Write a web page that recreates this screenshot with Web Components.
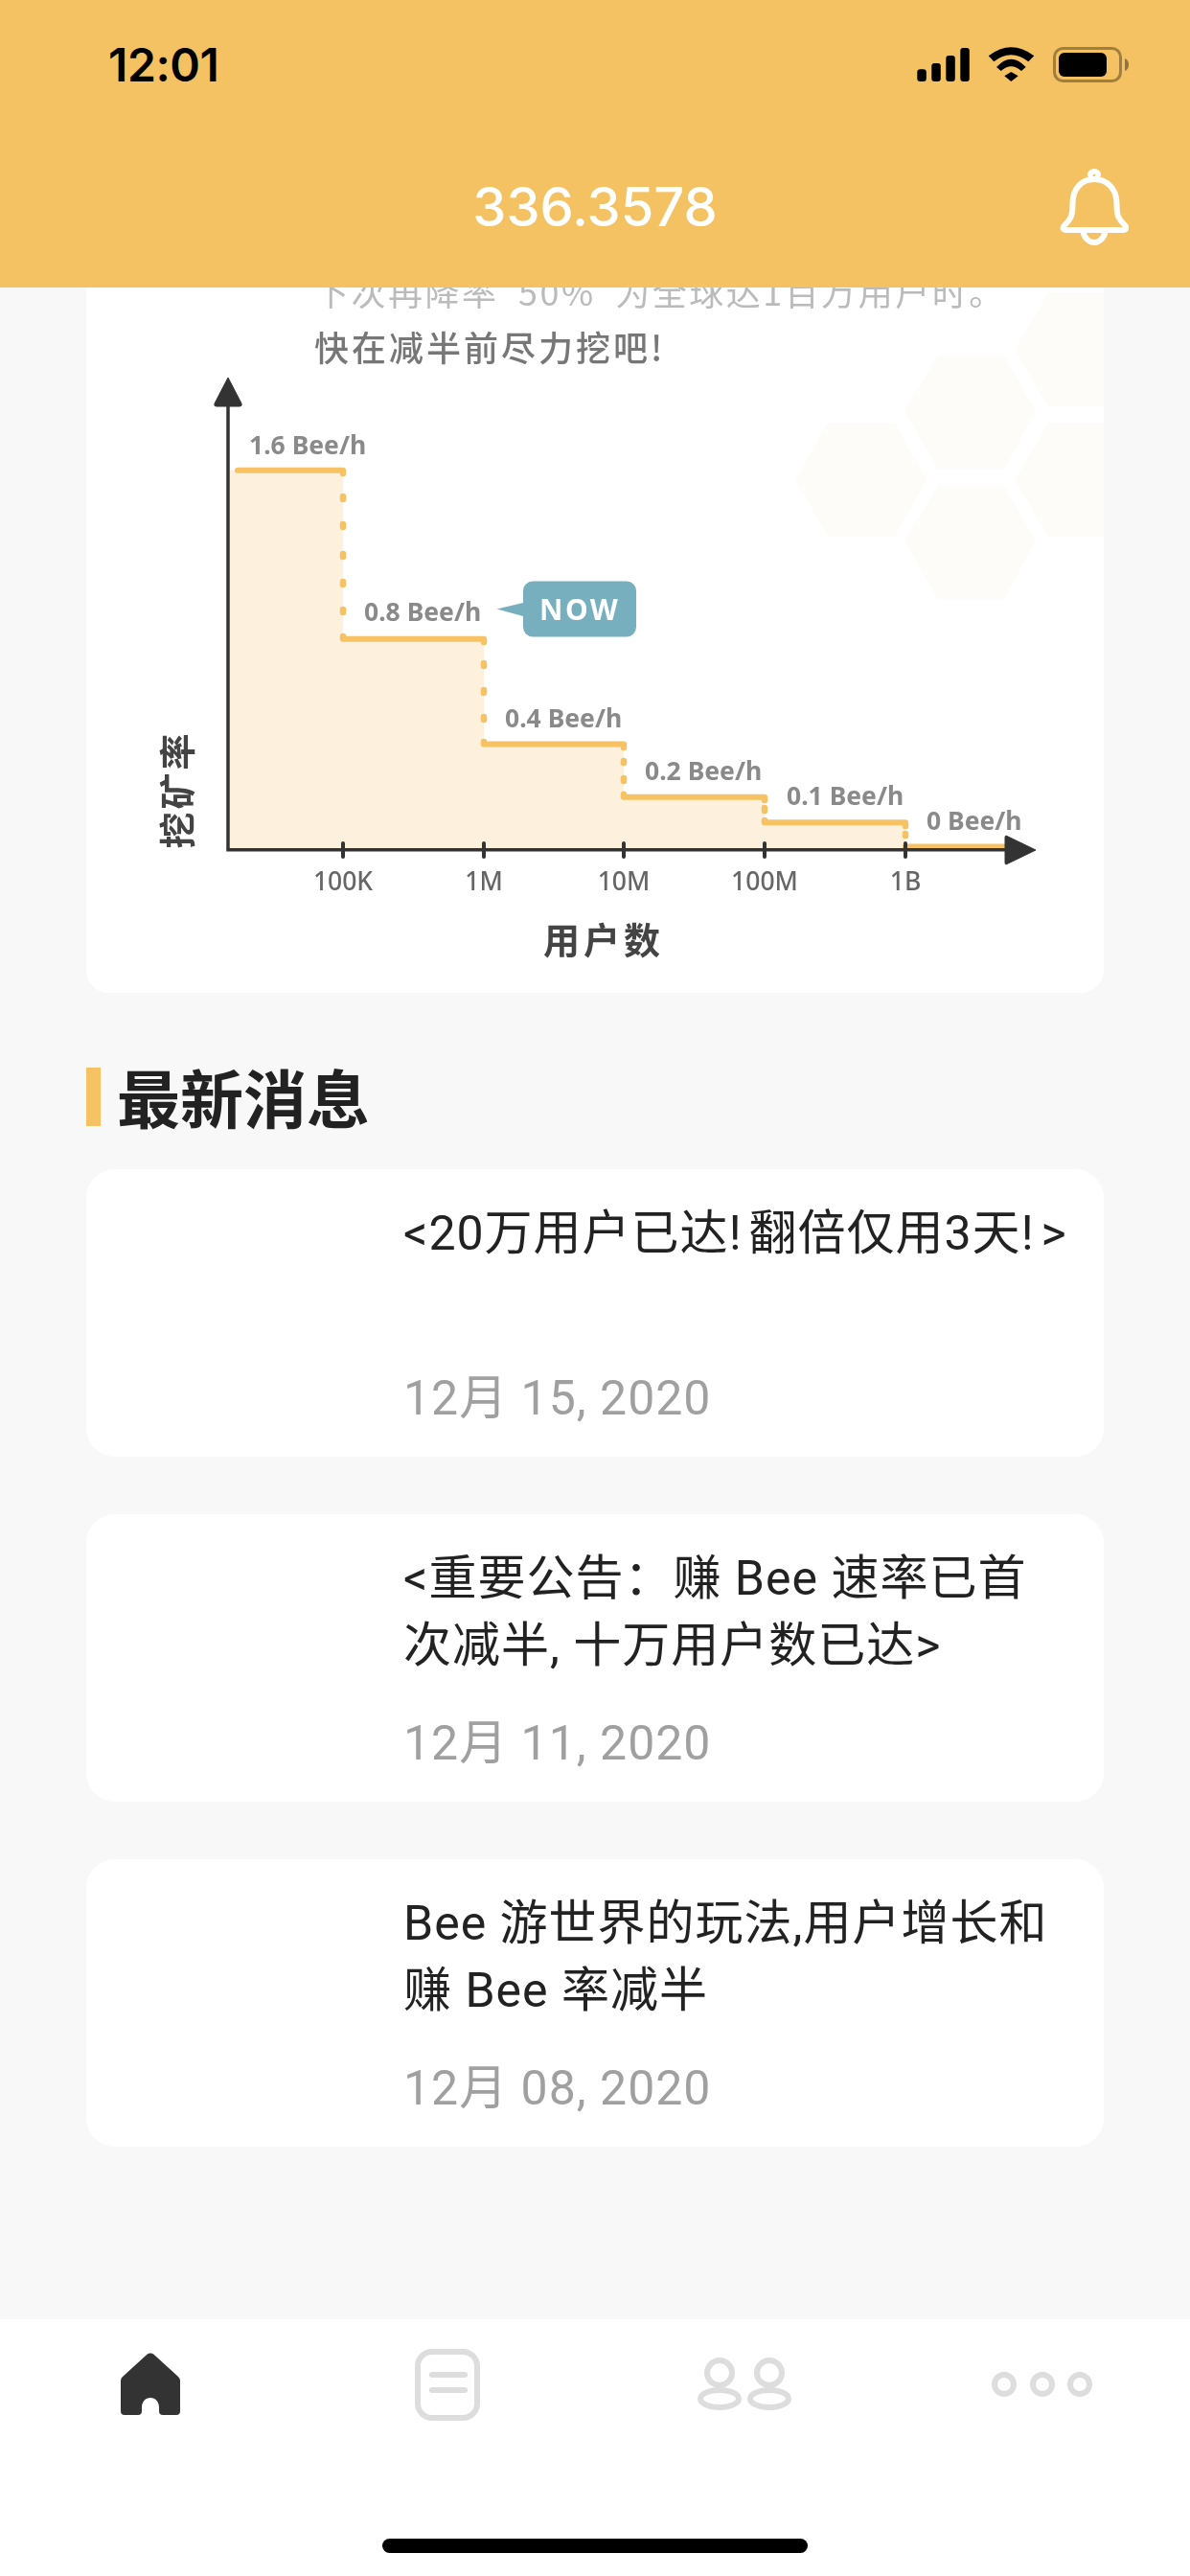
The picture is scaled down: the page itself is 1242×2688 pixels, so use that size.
<!doctype html>
<html>
  <head>
    <meta charset="utf-8">
    <title>Bee</title>
    <style>
      html, body {
        margin: 0;
        padding: 0;
      }

      body {
        background: #f8f8f8;
        color: #222;
        display: flex;
        flex-direction: column;
        font-family: Roboto, "Noto Sans CJK SC", sans-serif;
        height: 2688px;
        overflow: hidden;
        width: 1242px;
      }
    </style>
  </head>
  <body>
    <app-header value="336.3578"></app-header>

    <page-content>
      <mining-chart></mining-chart>

      <section-title>最新消息</section-title>

      <news-list>
        <news-card>
          &lt;20万用户已达<span style="letter-spacing: 8px">!</span>翻倍仅用3天<span style="letter-spacing: 8px">!</span>&gt;
          <span slot="date">12月 15, 2020</span>
        </news-card>
        <news-card>
          &lt;重要公告：赚 Bee 速率已首<br>次减半, 十万用户数已达&gt;
          <span slot="date">12月 11, 2020</span>
        </news-card>
        <news-card>
          Bee 游世界的玩法,用户增长和<br>赚 Bee 率减半
          <span slot="date">12月 08, 2020</span>
        </news-card>
      </news-list>
    </page-content>

    <tab-bar></tab-bar>

    <template data-name="status-bar">
      <style>
        :host {
          align-items: center;
          box-sizing: border-box;
          color: #000;
          display: flex;
          height: 135px;
          justify-content: space-between;
          padding: 0 64px 0 113px;
        }

        .time {
          font-family: Inter, "Liberation Sans", sans-serif;
          font-size: 48px;
          font-weight: 600;
          letter-spacing: -.4px;
          line-height: 37px;
        }

        svg {
          display: block;
        }
      </style>

      <span class="time">12:01</span>
      <svg width="221" height="37" viewBox="957 49 221 37">
        <rect x="957.3" y="72.3" width="9.5" height="12.7" rx="3"></rect>
        <rect x="972.3" y="66" width="9.5" height="19" rx="3"></rect>
        <rect x="987.3" y="58" width="9.5" height="27" rx="3"></rect>
        <rect x="1002.3" y="50" width="9.5" height="35" rx="3"></rect>
        <path d="M1031.7 58.3Q1055.3 40.3 1079.3 58.3L1073.3 64.3Q1055.3 50.3 1037.3 64.3Z"></path>
        <path d="M1040 70Q1055.3 53.4 1070.7 70L1066 74Q1055.3 64.6 1044.7 74Z"></path>
        <path d="M1048.3 79.3L1055.3 75L1062.7 79.3L1055.3 85Z"></path>
        <rect x="1100.5" y="50.5" width="69" height="34" rx="9" fill="none" stroke="#000" stroke-opacity=".35" stroke-width="3"></rect>
        <rect x="1105" y="55" width="50" height="25" rx="6"></rect>
        <path d="M1174 61C1177 62 1178 65 1178 67.500C1178 70 1177 73 1174 74Z" fill-opacity=".4"></path>
      </svg>
    </template>

    <template data-name="app-header">
      <style>
        :host {
          background: #f4c262;
          display: block;
          flex: none;
          height: 300px;
          position: relative;
          z-index: 1;
        }

        .nav {
          align-items: center;
          display: grid;
          grid-template-columns: 1fr auto 1fr;
          height: 162px;
          padding-right: 64px;
          padding-left: 64px;
        }

        .value {
          color: #fff;
          font-family: Inter, "Liberation Sans", sans-serif;
          font-size: 56px;
          font-weight: 500;
          grid-column: 2;
        }

        svg {
          display: block;
          grid-column: 3;
          justify-self: end;
        }
      </style>

      <status-bar></status-bar>
      <div class="nav">
        <span class="value"></span>
        <svg width="72" height="82" viewBox="1106 176 72 82" fill="none" stroke="#fff" stroke-width="6" stroke-linejoin="round">
          <rect x="1135" y="177" width="14" height="12" rx="7" fill="#fff" stroke="none"></rect>
          <path d="M1142 183V191" stroke="#f4c262" stroke-width="2.500"></path>
          <path d="M1142 188C1128 188 1119.500 199 1119.500 213C1119.500 226 1118 229 1111 236C1108 239 1110 241 1113 241H1172C1175 241 1177 239 1174 236C1167 229 1165.500 226 1165.500 213C1165.500 199 1156 188 1142 188Z"></path>
          <path d="M1130.500 243C1132 250 1137 254 1142 254C1147 254 1152 250 1153.500 243"></path>
        </svg>
      </div>
    </template>

    <template data-name="page-content">
      <style>
        :host {
          display: block;
          flex: 1;
          min-height: 0;
          overflow: hidden;
          padding: 0 90px;
        }
      </style>

      <slot></slot>
    </template>

    <template data-name="mining-chart">
      <style>
        :host {
          background: #fff;
          border-radius: 24px;
          display: block;
          height: 756px;
          margin-top: -20px;
          overflow: hidden;
        }

        svg {
          display: block;
          filter: blur(.5px);
        }

        .note {
          font-family: "Noto Sans CJK SC", sans-serif;
          font-size: 36px;
        }

        .rate {
          fill: #8a8a8a;
          font-family: "Noto Sans", sans-serif;
          font-size: 26.500px;
          font-weight: 700;
        }

        .tick {
          fill: #666;
          font-family: "Noto Sans", sans-serif;
          font-size: 26.500px;
          font-weight: 500;
          text-anchor: middle;
        }

        .axis {
          fill: #444;
          font-family: "Noto Sans CJK SC", sans-serif;
          font-size: 38px;
          font-weight: 700;
          text-anchor: middle;
        }

        .now {
          fill: #fff;
          font-family: "Noto Sans", sans-serif;
          font-size: 30px;
          font-weight: 700;
          letter-spacing: 2.500px;
        }
      </style>

      <svg width="1062" height="756" viewBox="90 280 1062 756">
        <g fill="#fdfcf8">
          <path d="M830 500.500L864 441.500H934L967 500.500L934 560H864Z"></path>
          <path d="M944 429L979 371H1048L1081 429L1048 490H979Z"></path>
          <path d="M944 564.500L979 507H1048L1081 564.500L1048 626H979Z"></path>
          <path d="M1059 500.500L1094 441.500H1152V560H1094Z"></path>
          <path d="M1059 365L1094 305.500H1152V424.500H1094Z"></path>
        </g>

        <text class="note" x="328" y="319" fill="#bbb" letter-spacing="2.500" word-spacing="10">下次再降率 50% 为全球达1百万用户时。</text>
        <text class="note" x="328" y="377" fill="#777" font-weight="500" letter-spacing="3">快在减半前尽力挖吧!</text>

        <path d="M240 490.800H358V666.700H505V776.600H651V831.700H798V858.200H945V887H240Z" fill="#fdf1de"></path>

        <g fill="none" stroke="#f6c263" stroke-width="6" stroke-linecap="round">
          <path d="M248 490.800H358M358 666.700H505M505 776.600H651M651 831.700H798M798 858.200H945M945 883.500H1050"></path>
          <path stroke-width="6.500" d="M358 492V494M358 518V521M358 547V550M358 578V581M358 607V610M358 636V639M358 664V666
                   M505 668V670M505 692V695M505 720V723M505 748V751M505 774V776
                   M651 778V780M651 794V796M651 812V815M651 829V831
                   M798 833V835M798 843V846M798 856V858
                   M945 860V862M945 870V872"></path>
        </g>

        <g fill="none" stroke="#333" stroke-width="3.500">
          <path d="M238 420V886.800H1055"></path>
          <path stroke-width="4" stroke-linecap="round" d="M358 880V894M505 880V894M651 880V894M798 880V894M945 880V894"></path>
        </g>
        <path d="M238 394L252 421Q253 424 250 424H226Q223 424 224 421Z" fill="#333" stroke="#333" stroke-linejoin="round"></path>
        <path d="M1050 872L1081 887L1050 902Q1049 902 1049 900V874Q1049 872 1050 872Z" fill="#333" stroke="#333" stroke-linejoin="round"></path>

        <text class="rate" x="260" y="474">1.6 Bee/h</text>
        <text class="rate" x="380" y="648">0.8 Bee/h</text>
        <text class="rate" x="527" y="759">0.4 Bee/h</text>
        <text class="rate" x="673" y="814">0.2 Bee/h</text>
        <text class="rate" x="821" y="840">0.1 Bee/h</text>
        <text class="rate" x="967" y="866">0 Bee/h</text>

        <path d="M518.500 635.500L546 629V643Z" fill="#78afbe"></path>
        <rect x="546" y="606.500" width="118" height="58" rx="10" fill="#78afbe"></rect>
        <text class="now" x="563" y="647">NOW</text>

        <text class="tick" x="358" y="929">100K</text>
        <text class="tick" x="505" y="929">1M</text>
        <text class="tick" x="651" y="929">10M</text>
        <text class="tick" x="798" y="929">100M</text>
        <text class="tick" x="945" y="929">1B</text>

        <text class="axis" transform="translate(199 824) rotate(-90)" letter-spacing="3">挖矿率</text>
        <text class="axis" x="630" y="995" letter-spacing="4">用户数</text>
      </svg>
    </template>

    <template data-name="section-title">
      <style>
        :host {
          align-items: center;
          color: #222;
          display: flex;
          font-family: "Noto Sans CJK SC", sans-serif;
          font-size: 66px;
          font-weight: 700;
          gap: 17px;
          height: 61px;
          margin: 78px 0 45px;
        }

        .bar {
          background: #f6c263;
          height: 61px;
          width: 15px;
        }

        .text {
          margin-top: -4px;
        }
      </style>

      <span class="bar"></span>
      <span class="text"><slot></slot></span>
    </template>

    <template data-name="news-list">
      <style>
        :host {
          display: flex;
          flex-direction: column;
          gap: 60px;
        }
      </style>

      <slot></slot>
    </template>

    <template data-name="news-card">
      <style>
        :host {
          background: #fff;
          border-radius: 30px;
          box-sizing: border-box;
          display: flex;
          flex-direction: column;
          height: 300px;
          justify-content: space-between;
          letter-spacing: 1px;
          padding: 32px 0 26px 331px;
        }

        .title {
          color: #222;
          font-size: 50px;
          line-height: 70px;
        }

        .date {
          color: #a0a0a0;
          font-size: 50px;
          line-height: 70px;
        }
      </style>

      <div class="title"><slot></slot></div>
      <div class="date"><slot name="date"></slot></div>
    </template>

    <template data-name="tab-bar">
      <style>
        :host {
          align-items: center;
          background: #fff;
          display: flex;
          flex: none;
          flex-direction: column;
          height: 268px;
        }

        .tabs {
          align-items: center;
          display: grid;
          grid-template-columns: repeat(4, 1fr);
          height: 136px;
          justify-items: center;
          width: 100%;
        }

        svg {
          display: block;
          margin-left: 2px;
        }

        .home {
          margin-left: 4px;
        }

        .indicator {
          background: #000;
          border-radius: 8px;
          height: 15px;
          margin-top: 93px;
          width: 444px;
        }
      </style>

      <div class="tabs">
        <svg class="home" width="64" height="66" viewBox="0 0 64 66">
          <path fill="#333" d="M28.500 1.800Q32 -.6 35.500 1.800L61 25Q63 27 63 29V61Q63 65 59 65H45Q41 65 41 61V57C41 51 37 47 32 47C27 47 23 51 23 57V61Q23 65 19 65H5Q1 65 1 61V29Q1 27 3 25Z"></path>
        </svg>
        <svg width="68" height="75" viewBox="0 0 68 75" fill="none" stroke="#ddd" stroke-width="6" stroke-linecap="round">
          <rect x="3" y="3" width="62" height="69" rx="15"></rect>
          <path d="M18 27H52M18 43H52"></path>
        </svg>
        <svg width="100" height="56" viewBox="0 0 100 56" fill="none" stroke="#ddd" stroke-width="6">
          <circle cx="24" cy="16" r="13"></circle>
          <ellipse cx="24" cy="43" rx="20" ry="9"></ellipse>
          <circle cx="76" cy="16" r="13"></circle>
          <ellipse cx="76" cy="43" rx="20" ry="9"></ellipse>
        </svg>
        <svg width="106" height="26" viewBox="0 0 106 26" fill="none" stroke="#ddd" stroke-width="6">
          <circle cx="13" cy="13" r="10"></circle>
          <circle cx="53" cy="13" r="10"></circle>
          <circle cx="92" cy="13" r="10"></circle>
        </svg>
      </div>
      <div class="indicator"></div>
    </template>

    <script>
      const stamp = (host, name) => {
        const template = document.querySelector(`template[data-name="${name}"]`)
        host.attachShadow({ mode: 'open' }).append(template.content.cloneNode(true))
      }

      customElements.define('status-bar', class extends HTMLElement {
        connectedCallback() {
          stamp(this, 'status-bar')
        }
      })

      customElements.define('app-header', class extends HTMLElement {
        connectedCallback() {
          stamp(this, 'app-header')
          this.shadowRoot.querySelector('.value').textContent = this.getAttribute('value')
        }
      })

      customElements.define('page-content', class extends HTMLElement {
        connectedCallback() {
          stamp(this, 'page-content')
        }
      })

      customElements.define('mining-chart', class extends HTMLElement {
        connectedCallback() {
          stamp(this, 'mining-chart')
        }
      })

      customElements.define('section-title', class extends HTMLElement {
        connectedCallback() {
          stamp(this, 'section-title')
        }
      })

      customElements.define('news-list', class extends HTMLElement {
        connectedCallback() {
          stamp(this, 'news-list')
        }
      })

      customElements.define('news-card', class extends HTMLElement {
        connectedCallback() {
          stamp(this, 'news-card')
        }
      })

      customElements.define('tab-bar', class extends HTMLElement {
        connectedCallback() {
          stamp(this, 'tab-bar')
        }
      })
    </script>
  </body>
</html>
